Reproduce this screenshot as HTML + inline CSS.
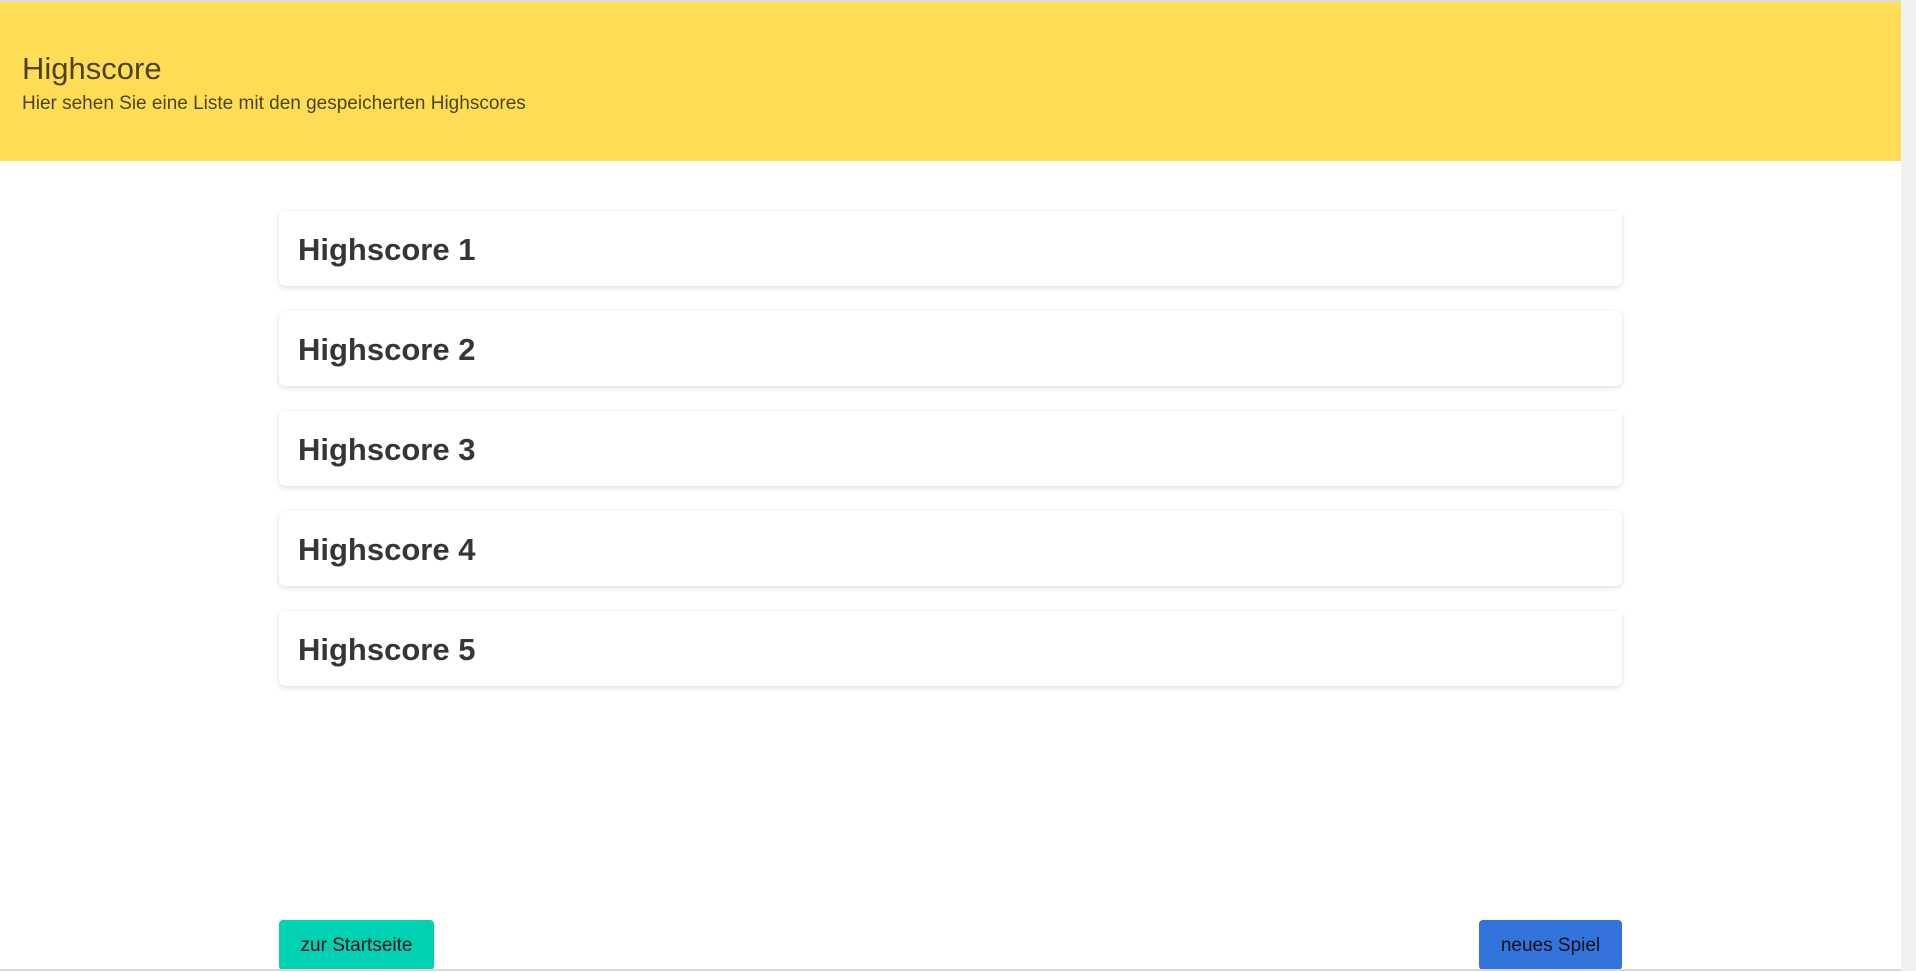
<!DOCTYPE html>
<html><head><meta charset="utf-8"><style>
html,body{margin:0;padding:0;}
body{width:1916px;height:971px;overflow:hidden;background:#fff;font-family:"Liberation Sans",sans-serif;position:relative;}
.top{position:absolute;left:0;top:0;width:1901px;height:2px;background:#dcdcdc;}
.hero{position:absolute;left:0;top:2px;width:1901px;height:159px;background:#ffdd57;color:rgba(0,0,0,.7);}
.hero h1{position:absolute;left:22px;top:47px;margin:0;font-size:31px;font-weight:normal;line-height:40px;}
.hero p{position:absolute;left:22px;top:90px;margin:0;font-size:19px;line-height:24px;}
.card{position:absolute;left:279px;width:1343px;height:75px;background:#fff;border-radius:6px;box-shadow:0 2px 6px rgba(10,10,10,.12),0 0 0 1px rgba(10,10,10,.02);}
.card span{position:absolute;left:19px;top:20px;font-size:31px;font-weight:600;color:#363636;line-height:38px;}
.btn{position:absolute;top:920px;height:50px;border-radius:4px;color:#111;font-size:19px;line-height:52px;text-align:center;}
.sb{position:absolute;right:0;top:0;width:15px;height:971px;background:#f1f1f1;}
.bl{position:absolute;left:0;top:969px;width:1901px;height:2px;background:#d8d8d8;}
</style></head><body>
<div class="top"></div>
<div class="hero"><h1>Highscore</h1><p>Hier sehen Sie eine Liste mit den gespeicherten Highscores</p></div>
<div class="card" style="top:211px"><span>Highscore 1</span></div>
<div class="card" style="top:311px"><span>Highscore 2</span></div>
<div class="card" style="top:411px"><span>Highscore 3</span></div>
<div class="card" style="top:511px"><span>Highscore 4</span></div>
<div class="card" style="top:611px"><span>Highscore 5</span></div>
<div class="btn" style="left:279px;width:155px;background:#00d1b2">zur Startseite</div>
<div class="btn" style="left:1479px;width:143px;background:#3273dc">neues Spiel</div>
<div class="bl"></div>
<div class="sb"></div>
</body></html>
